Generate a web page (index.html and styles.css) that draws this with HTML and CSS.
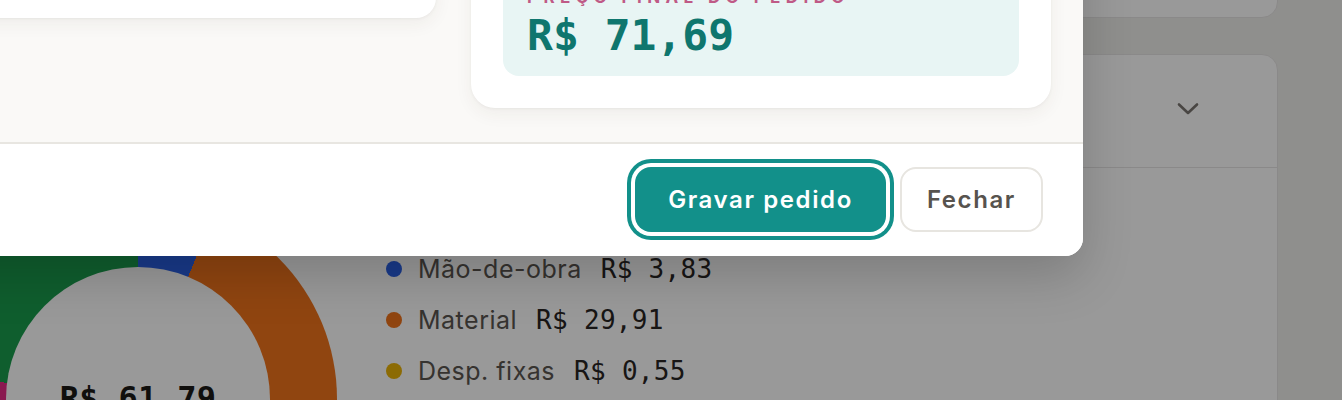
FILE: index.html
```html
<!DOCTYPE html>
<html lang="pt-BR">
<head>
<meta charset="utf-8">
<title>Pedido</title>
<link rel="stylesheet" href="styles.css">
</head>
<body>
<div class="page">
  <section class="card card-top">
    <h2 class="card-title">Dados do produto</h2>
  </section>
  <section class="card card-cost">
    <header class="card-head">
      <h2 class="card-title">Composição do custo</h2>
      <svg class="chevron" width="22" height="14" viewBox="0 0 22 14" aria-hidden="true"><path d="M2 2.5l9 8.5 9-8.5" fill="none" stroke="currentColor" stroke-width="2.6" stroke-linecap="round" stroke-linejoin="round"/></svg>
    </header>
    <div class="cost-body">
      <div class="donut">
        <div class="donut-hole">
          <span class="donut-total">R$ 61,79</span>
          <span class="donut-caption">custo total</span>
        </div>
      </div>
      <ul class="legend">
        <li><span class="dot dot-blue"></span><span class="legend-label">Mão-de-obra</span><span class="legend-value">R$ 3,83</span></li>
        <li><span class="dot dot-orange"></span><span class="legend-label">Material</span><span class="legend-value">R$ 29,91</span></li>
        <li><span class="dot dot-yellow"></span><span class="legend-label">Desp. fixas</span><span class="legend-value">R$ 0,55</span></li>
        <li><span class="dot dot-pink"></span><span class="legend-label">Desp. variáveis</span><span class="legend-value">R$ 13,25</span></li>
        <li><span class="dot dot-green"></span><span class="legend-label">Impostos</span><span class="legend-value">R$ 14,25</span></li>
      </ul>
    </div>
  </section>
</div>

<div class="backdrop"></div>

<div class="modal" role="dialog" aria-label="Novo pedido">
  <div class="modal-body">
    <div class="col-left">
      <div class="panel panel-left">
        <h3 class="panel-title">Itens do pedido</h3>
        <p class="panel-text">Quantidade: 1</p>
      </div>
    </div>
    <div class="panel panel-summary">
      <h3 class="panel-title">Resumo</h3>
      <div class="final-box">
        <div class="final-label">Preço final do pedido</div>
        <div class="final-value">R$ 71,69</div>
      </div>
    </div>
  </div>
  <footer class="modal-foot">
    <button class="btn btn-primary" type="button">Gravar pedido</button>
    <button class="btn btn-ghost" type="button">Fechar</button>
  </footer>
</div>
</body>
</html>
```

FILE: styles.css
```css
* { box-sizing: border-box; }

html, body {
  margin: 0;
  height: 400px;
  overflow: hidden;
}

body {
  background: #efeeec;
  font-family: Inter, "Noto Sans", "Liberation Sans", sans-serif;
  color: #292524;
}

/* ---------- background page ---------- */
.page {
  display: flex;
  flex-direction: column;
  gap: 36px;
  margin: -120px 64px 0 -94px;
}

.card {
  background: #ffffff;
  border: 1px solid #e7e5e4;
  border-radius: 16px;
}

.card-top {
  height: 138px;
  padding: 24px 32px;
}

.card-title {
  margin: 0;
  font-size: 22px;
  font-weight: 600;
}

.card-head {
  height: 113px;
  padding: 0 78px 4px 32px;
  display: flex;
  align-items: center;
  justify-content: space-between;
  border-bottom: 1px solid #e7e5e4;
}

.chevron {
  color: #7a7571;
  display: block;
}

.cost-body {
  display: flex;
  align-items: flex-start;
  gap: 49px;
  padding: 32px;
}

.donut {
  flex: none;
  width: 398px;
  height: 398px;
  border-radius: 50%;
  background: conic-gradient(
    #2b61e6 0deg 22.3deg,
    #f0731b 22.3deg 196.6deg,
    #eab308 196.6deg 199.8deg,
    #e62b85 199.8deg 277deg,
    #199d4d 277deg 360deg
  );
  display: flex;
  align-items: center;
  justify-content: center;
}

.donut-hole {
  width: 264px;
  height: 264px;
  border-radius: 50%;
  background: #ffffff;
  display: flex;
  flex-direction: column;
  align-items: center;
  justify-content: center;
  gap: 4px;
  padding-top: 22px;
}

.donut-total {
  font-family: "DejaVu Sans Mono", "Liberation Mono", monospace;
  font-weight: 700;
  font-size: 32px;
  letter-spacing: 0.3px;
  color: #1c1917;
}

.donut-caption {
  font-size: 16px;
  color: #78716c;
}

.legend {
  list-style: none;
  margin: 51px 0 0;
  padding: 0;
  display: flex;
  flex-direction: column;
  gap: 15px;
}

.legend li {
  height: 36px;
  display: flex;
  align-items: center;
  gap: 16px;
}

.dot {
  width: 16px;
  height: 16px;
  border-radius: 50%;
  flex: none;
}
.dot-blue { background: #2b61e6; }
.dot-orange { background: #f0731b; }
.dot-yellow { background: #eab308; }
.dot-pink { background: #e62b85; }
.dot-green { background: #199d4d; }

.legend-label {
  font-size: 25px;
  color: #5a5550;
  letter-spacing: 0.5px;
}

.legend-value {
  font-family: "DejaVu Sans Mono", "Liberation Mono", monospace;
  font-size: 26px;
  letter-spacing: 0.3px;
  color: #292524;
  margin-left: 3px;
}

/* ---------- backdrop ---------- */
.backdrop {
  position: fixed;
  inset: 0;
  background: rgba(0, 0, 0, 0.4);
}

/* ---------- modal ---------- */
.modal {
  position: fixed;
  right: 259px;
  bottom: 144px;
  width: 1500px;
  background: #ffffff;
  border-radius: 18px;
  overflow: hidden;
  box-shadow: 0 20px 50px rgba(0, 0, 0, 0.18);
}

.modal-body {
  background: #faf9f7;
  padding: 32px 32px 34px;
  display: grid;
  grid-template-columns: 1fr 580px;
  column-gap: 35px;
  align-items: end;
}

.col-left {
  margin-bottom: 90px;
}

.panel {
  background: #ffffff;
  border-radius: 24px;
  box-shadow: 0 6px 18px rgba(60, 50, 40, 0.06), 0 1px 3px rgba(60, 50, 40, 0.05);
}

.panel-left {
  border-radius: 20px;
  padding: 28px 32px;
}

.panel-summary {
  padding: 32px;
}

.panel-title {
  margin: 0 0 20px;
  font-size: 20px;
  font-weight: 600;
  color: #292524;
}

.panel-text {
  margin: 0;
  font-size: 18px;
  color: #57534e;
}

.final-box {
  background: #e8f5f4;
  border-radius: 16px;
  padding: 20px 24px 18px;
}

.final-label {
  font-size: 17px;
  line-height: 20px;
  font-weight: 700;
  letter-spacing: 5.4px;
  text-transform: uppercase;
  color: #bf5a86;
  margin-bottom: 5px;
}

.final-value {
  font-family: "DejaVu Sans Mono", "Liberation Mono", monospace;
  font-weight: 700;
  font-size: 43px;
  line-height: 46px;
  color: #0f766e;
}

.modal-foot {
  border-top: 2px solid #e8e6e1;
  background: #ffffff;
  padding: 23px 40px 24px;
  display: flex;
  justify-content: flex-end;
  gap: 14px;
}

.btn {
  height: 65px;
  border-radius: 16px;
  font-family: Inter, "Noto Sans", sans-serif;
  font-size: 24px;
  font-weight: 600;
  letter-spacing: 1.6px;
  cursor: pointer;
}

.btn-primary {
  background: #12908a;
  color: #ffffff;
  border: none;
  padding: 0 33px;
  box-shadow: 0 0 0 4px #ffffff, 0 0 0 8px #12908a;
}

.btn-ghost {
  background: #ffffff;
  color: #57534e;
  border: 2px solid #e7e5e0;
  padding: 0 25px;
}
```
